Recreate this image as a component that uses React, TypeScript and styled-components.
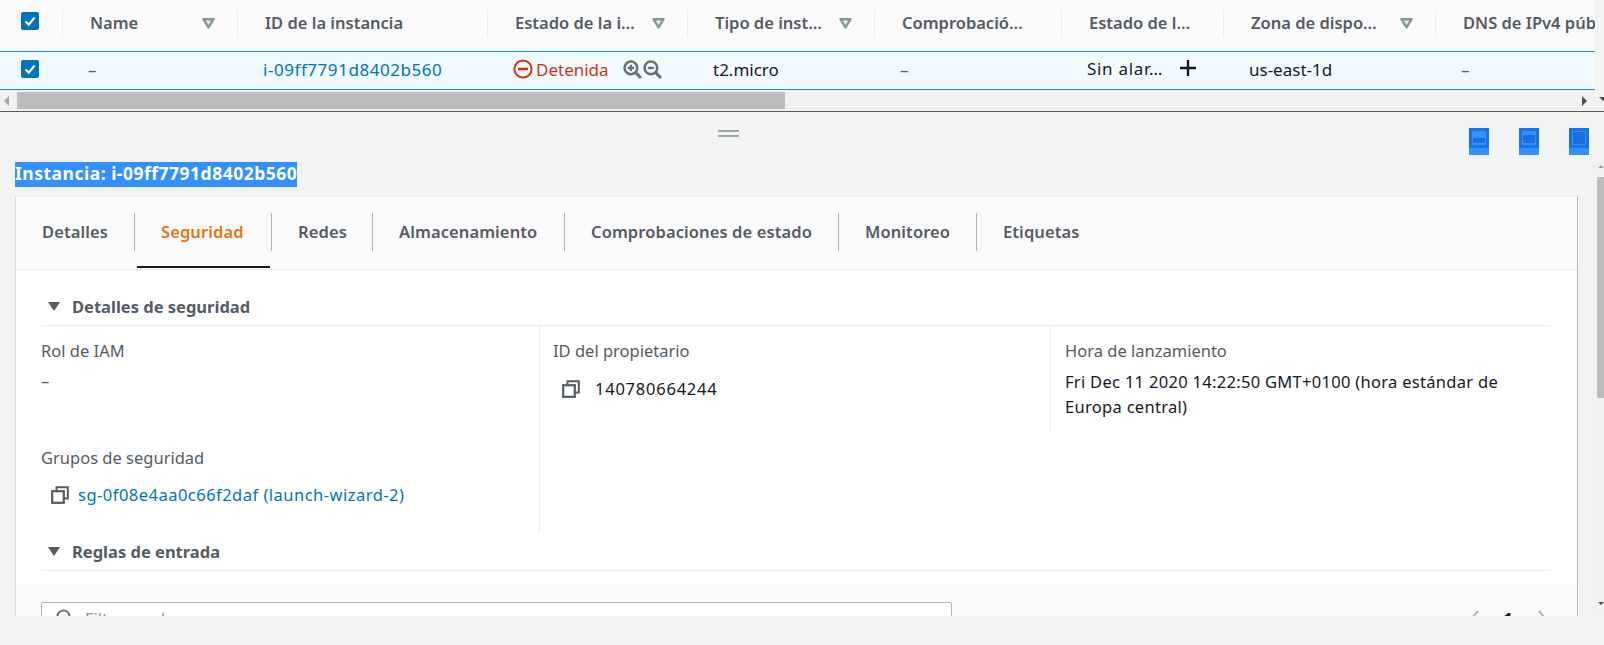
import styled, { createGlobalStyle } from "styled-components";

const Global = createGlobalStyle`
  html, body { margin: 0; padding: 0; background: #f2f3f3; }
  body { font-family: "Noto Sans", Roboto, "Liberation Sans", sans-serif; overflow: hidden; }
`;

const Page = styled.div`
  position: relative;
  width: 1604px;
  height: 645px;
  overflow: hidden;
  background: #f2f3f3;
`;

const columns = "63px 175px 250px 200px 187px 187px 162px 212px 159px";

const TableHead = styled.div`
  display: grid;
  grid-template-columns: ${columns};
  width: 1595px;
  height: 51px;
  background: #fafafa;
  box-sizing: border-box;
  overflow: hidden;
`;

const HeadCell = styled.div<{ $last?: boolean }>`
  position: relative;
  display: flex;
  align-items: center;
  justify-content: space-between;
  height: 27px;
  margin-top: 10px;
  padding: 0 22px 0 27px;
  box-sizing: border-box;
  border-right: ${(p) => (p.$last ? "none" : "1px solid #eaeded")};
  color: #545b64;
  font-size: 16.5px;
  font-weight: 600;
  white-space: nowrap;
  min-width: 0;
`;

const HeadText = styled.span`
  margin-bottom: 3px;
`;

const CheckCell = styled.div`
  height: 27px;
  margin-top: 10px;
  border-right: 1px solid #eaeded;
  padding: 2px 0 0 21px;
  box-sizing: border-box;
`;

const Row = styled.div`
  display: grid;
  grid-template-columns: ${columns};
  width: 1595px;
  height: 39px;
  box-sizing: border-box;
  background: #f1faff;
  border-top: 1px solid #0a97bd;
  border-bottom: 1px solid #0a97bd;
  align-items: center;
  color: #16191f;
  font-size: 17px;
`;

const RowCell = styled.div<{ $raise?: boolean }>`
  display: flex;
  align-items: center;
  padding: 0 0 3px 25px;
  white-space: nowrap;
  ${(p) => (p.$raise ? "margin-top: -2px; letter-spacing: .7px;" : "")}
`;

const RowCheck = styled.div`
  padding: 0 0 3px 21px;
  display: flex;
`;

const Dash = styled.span`
  color: #545b64;
`;

const TableLink = styled.a`
  color: #0073bb;
  letter-spacing: .55px;
`;

const Stopped = styled.span`
  display: inline-flex;
  align-items: center;
  gap: 3px;
  color: #d13212;
  margin-right: 14px;
`;

const ZoomIcons = styled.span`
  display: inline-flex;
  gap: 1px;
`;

const HScroll = styled.div`
  position: relative;
  width: 1604px;
  height: 21px;
  background: #f1f1f1;
  border-bottom: 1px solid #545b64;
  box-sizing: content-box;
`;

const HThumb = styled.div`
  position: absolute;
  left: 17px;
  top: 2px;
  width: 768px;
  height: 17px;
  background: #bdbdbd;
`;

const ArrowLeft = styled.div`
  position: absolute;
  left: 4px;
  top: 6px;
  border: 5px solid transparent;
  border-left: 0;
  border-right: 5px solid #a3a3a3;
`;

const ArrowRight = styled.div`
  position: absolute;
  left: 1582px;
  top: 6px;
  border: 5px solid transparent;
  border-right: 0;
  border-left: 5px solid #505050;
`;

const ArrowDownSmall = styled.div`
  position: absolute;
  left: 1599px;
  top: 7px;
  border: 4px solid transparent;
  border-bottom: 0;
  border-top: 4px solid #505050;
`;

const SplitBar = styled.div`
  position: relative;
  height: 50px;
  width: 1604px;
`;

const Handle = styled.div`
  position: absolute;
  left: 718px;
  top: 18px;
  width: 21px;
  height: 7px;
  border-top: 2px solid #a0a5a5;
  border-bottom: 2px solid #a0a5a5;
  box-sizing: border-box;
`;

const LayoutIcons = styled.div`
  position: absolute;
  left: 1469px;
  top: 16px;
  display: flex;
  gap: 30px;
`;

const TitleLine = styled.div`
  height: 34px;
  padding-left: 15px;
`;

const Title = styled.span`
  display: inline-block;
  background: #3390ff;
  color: #fff;
  font-size: 17.5px;
  font-weight: 700;
  letter-spacing: .5px;
  line-height: 23px;
  height: 25px;
  white-space: nowrap;
`;

const Card = styled.div`
  width: 1563px;
  height: 420px;
  margin-left: 15px;
  box-sizing: border-box;
  background: #fff;
  border-left: 1px solid #d5dbdb;
  border-right: 1px solid #aab7b8;
  border-top: 1px solid #eaeded;
  overflow: hidden;
`;

const Tabs = styled.div`
  display: flex;
  height: 72px;
  background: #fafafa;
  border-bottom: 1px solid #eaeded;
`;

const Tab = styled.div<{ $active?: boolean; $width: number; $last?: boolean }>`
  position: relative;
  width: ${(p) => p.$width}px;
  height: 38px;
  margin-top: 16px;
  box-sizing: border-box;
  display: flex;
  align-items: center;
  padding: 0 0 2px 26px;
  border-right: ${(p) => (p.$last ? "none" : "1px solid #aab7b8")};
  color: ${(p) => (p.$active ? "#ec7211" : "#545b64")};
  font-size: 16.5px;
  font-weight: 600;
  letter-spacing: .1px;
  white-space: nowrap;
  ${(p) =>
    p.$active
      ? `&::after {
          content: "";
          position: absolute;
          left: 2px;
          right: 1px;
          top: 53px;
          height: 2px;
          background: #16191f;
        }`
      : ""}
`;

const Body = styled.div`
  padding: 0 26px 0 25px;
`;

const SectionHead = styled.div<{ $top: number }>`
  display: flex;
  align-items: center;
  gap: 12px;
  margin-top: ${(p) => p.$top}px;
  height: 37px;
  padding: 0 0 2px 7px;
  border-bottom: 1px solid #eaeded;
  box-sizing: border-box;
  color: #545b64;
  font-size: 16.5px;
  font-weight: 700;
`;

const Caret = styled.span`
  width: 0;
  height: 0;
  border-left: 6px solid transparent;
  border-right: 6px solid transparent;
  border-top: 9px solid #545b64;
`;

const FieldGrid = styled.div`
  display: grid;
  grid-template-columns: 499px 510px 1fr;
  height: 208px;
`;

const Column = styled.div<{ $inset?: number; $rule?: boolean }>`
  padding-left: ${(p) => p.$inset ?? 0}px;
  padding-top: 14px;
  height: ${(p) => (p.$rule ? "207px" : "auto")};
  box-sizing: border-box;
  border-right: ${(p) => (p.$rule ? "1px solid #eaeded" : "none")};
`;

const ColumnShort = styled(Column)`
  height: 105px;
  border-left: 1px solid #eaeded;
  padding-right: 40px;
`;

const Label = styled.div`
  color: #545b64;
  font-size: 16.5px;
  line-height: 22px;
`;

const Value = styled.div<{ $gap?: number }>`
  color: #16191f;
  font-size: 16.5px;
  line-height: 25px;
  margin-top: ${(p) => p.$gap ?? 7}px;
`;

const DateValue = styled(Value)`
  letter-spacing: .3px;
`;

const CopyRow = styled.div<{ $left: number; $gap: number; $top: number; $spacing: number }>`
  display: flex;
  align-items: center;
  gap: ${(p) => p.$gap}px;
  padding-left: ${(p) => p.$left}px;
  margin-top: ${(p) => p.$top}px;
  color: #16191f;
  font-size: 16.5px;
  letter-spacing: ${(p) => p.$spacing}px;
  line-height: 25px;
`;

const GroupLabel = styled(Label)`
  margin-top: 54px;
`;

const Link = styled.a`
  color: #0073bb;
`;

const FilterBand = styled.div`
  display: flex;
  align-items: flex-start;
  justify-content: space-between;
  height: 60px;
  margin-top: 13px;
  background: #fafafa;
  padding: 18px 30px 0 25px;
`;

const FilterInput = styled.div`
  display: flex;
  align-items: center;
  gap: 11px;
  width: 911px;
  height: 32px;
  box-sizing: border-box;
  padding-left: 14px;
  background: #fff;
  border: 1px solid #aab7b8;
  border-radius: 2px;
  color: #879596;
  font-size: 16.5px;
`;

const Pager = styled.div`
  display: flex;
  align-items: center;
  gap: 24px;
  height: 32px;
  color: #16191f;
  font-size: 16.5px;
  font-weight: 700;
`;

const VScroll = styled.div`
  position: absolute;
  left: 1590px;
  top: 157px;
  width: 14px;
  height: 458px;
  background: #f1f1f1;
`;

const VThumb = styled.div`
  position: absolute;
  left: 7px;
  top: 20px;
  width: 7px;
  height: 221px;
  background: #bdbdbd;
`;

const VUp = styled.div`
  position: absolute;
  left: 8px;
  top: 8px;
  border: 3px solid transparent;
  border-top: 0;
  border-bottom: 3px solid #a3a3a3;
`;

const VDown = styled.div`
  position: absolute;
  left: 8px;
  top: 445px;
  border: 3px solid transparent;
  border-bottom: 0;
  border-top: 3px solid #505050;
`;

function Check() {
  return (
    <svg width="18" height="18" viewBox="0 0 18 18">
      <rect width="18" height="18" rx="2" fill="#0073bb" />
      <path d="M4.5 9.5 L7.8 12.6 L13.5 5.6" fill="none" stroke="#fff" strokeWidth="2.2" />
    </svg>
  );
}

function Funnel() {
  return (
    <svg width="13" height="11" viewBox="0 0 13 11" style={{ flexShrink: 0 }}>
      <path d="M1.4 1.2 H11.6 L6.5 9.4 Z" fill="#e4e8e8" stroke="#879596" strokeWidth="2.4" strokeLinejoin="round" />
    </svg>
  );
}

function StopIcon() {
  return (
    <svg width="20" height="20" viewBox="0 0 20 20">
      <circle cx="10" cy="10" r="8.6" fill="none" stroke="#d13212" strokeWidth="2" />
      <rect x="5" y="8.7" width="10" height="2.6" fill="#d13212" />
    </svg>
  );
}

function ZoomGlass({ plus }: { plus?: boolean }) {
  return (
    <svg width="19" height="19" viewBox="0 0 18 18">
      <circle cx="7.5" cy="7.5" r="6" fill="none" stroke="#687078" strokeWidth="2.4" />
      <path d="M12 12 L17 17" stroke="#687078" strokeWidth="2.8" />
      <path d="M4.5 7.5 H10.5" stroke="#687078" strokeWidth="2.2" />
      {plus && <path d="M7.5 4.5 V10.5" stroke="#687078" strokeWidth="2.2" />}
    </svg>
  );
}

function PlusIcon() {
  return (
    <svg width="20" height="20" viewBox="0 0 20 20" style={{ marginLeft: 15 }}>
      <path d="M10 2 V18 M2 10 H18" stroke="#16191f" strokeWidth="2.4" />
    </svg>
  );
}

function CopyIcon() {
  return (
    <svg width="18" height="18" viewBox="0 0 18 18" style={{ flexShrink: 0 }}>
      <path d="M5.5 5 V1.2 H16.8 V12.5 H13" fill="none" stroke="#545b64" strokeWidth="2" />
      <rect x="1.2" y="5.2" width="11.6" height="11.6" fill="none" stroke="#545b64" strokeWidth="2.2" />
    </svg>
  );
}

function LayoutIcon({ y, h }: { y: number; h: number }) {
  return (
    <svg width="20" height="27" viewBox="0 0 20 27">
      <rect width="20" height="20" fill="#1a73e0" />
      <rect y="20" width="20" height="7" fill="#3390ff" />
      <rect x="3" y="3" width="14" height="14" fill="#3390ff" />
      <rect x="4" y={y} width="12" height={h} rx="1" fill="#1a6fdc" />
    </svg>
  );
}

function Search() {
  return (
    <svg width="18" height="18" viewBox="0 0 18 18" style={{ flexShrink: 0 }}>
      <circle cx="7.5" cy="7.5" r="6" fill="none" stroke="#687078" strokeWidth="2" />
      <path d="M12 12 L17 17" stroke="#687078" strokeWidth="2.4" />
    </svg>
  );
}

function Chevron({ right }: { right?: boolean }) {
  return (
    <svg width="10" height="16" viewBox="0 0 10 16">
      <path d={right ? "M2 1 L8 8 L2 15" : "M8 1 L2 8 L8 15"} fill="none" stroke="#aab7b8" strokeWidth="2" />
    </svg>
  );
}

const heads: { text: string; filter?: boolean }[] = [
  { text: "Name", filter: true },
  { text: "ID de la instancia" },
  { text: "Estado de la i…", filter: true },
  { text: "Tipo de inst…", filter: true },
  { text: "Comprobació…" },
  { text: "Estado de l…" },
  { text: "Zona de dispo…", filter: true },
  { text: "DNS de IPv4 púb" },
];

const tabs = [
  { text: "Detalles", width: 119 },
  { text: "Seguridad", width: 137, active: true },
  { text: "Redes", width: 101 },
  { text: "Almacenamiento", width: 192 },
  { text: "Comprobaciones de estado", width: 274 },
  { text: "Monitoreo", width: 138 },
  { text: "Etiquetas", width: 200, last: true },
];

export default function App() {
  return (
    <Page>
      <Global />
      <TableHead>
        <CheckCell>
          <Check />
        </CheckCell>
        {heads.map((h, i) => (
          <HeadCell key={h.text} $last={i === heads.length - 1}>
            <HeadText>{h.text}</HeadText>
            {h.filter && <Funnel />}
          </HeadCell>
        ))}
      </TableHead>
      <Row>
        <RowCheck>
          <Check />
        </RowCheck>
        <RowCell>
          <Dash>–</Dash>
        </RowCell>
        <RowCell>
          <TableLink>i-09ff7791d8402b560</TableLink>
        </RowCell>
        <RowCell>
          <Stopped>
            <StopIcon />
            Detenida
          </Stopped>
          <ZoomIcons>
            <ZoomGlass plus />
            <ZoomGlass />
          </ZoomIcons>
        </RowCell>
        <RowCell>t2.micro</RowCell>
        <RowCell>
          <Dash>–</Dash>
        </RowCell>
        <RowCell $raise>
          Sin alar…
          <PlusIcon />
        </RowCell>
        <RowCell>us-east-1d</RowCell>
        <RowCell>
          <Dash>–</Dash>
        </RowCell>
      </Row>
      <HScroll>
        <ArrowLeft />
        <HThumb />
        <ArrowRight />
        <ArrowDownSmall />
      </HScroll>
      <SplitBar>
        <Handle />
        <LayoutIcons>
          <LayoutIcon y={10} h={5} />
          <LayoutIcon y={7} h={8} />
          <LayoutIcon y={4} h={12} />
        </LayoutIcons>
      </SplitBar>
      <TitleLine>
        <Title>Instancia: i-09ff7791d8402b560</Title>
      </TitleLine>
      <Card>
        <Tabs>
          {tabs.map((t) => (
            <Tab key={t.text} $active={t.active} $width={t.width} $last={t.last}>
              {t.text}
            </Tab>
          ))}
        </Tabs>
        <Body>
          <SectionHead $top={19}>
            <Caret />
            Detalles de seguridad
          </SectionHead>
          <FieldGrid>
            <Column $rule>
              <Label>Rol de IAM</Label>
              <Value $gap={6}>
                <Dash>–</Dash>
              </Value>
              <GroupLabel>Grupos de seguridad</GroupLabel>
              <CopyRow $left={10} $gap={9} $top={13} $spacing={0.48}>
                <CopyIcon />
                <Link>sg-0f08e4aa0c66f2daf (launch-wizard-2)</Link>
              </CopyRow>
            </Column>
            <Column $inset={13}>
              <Label>ID del propietario</Label>
              <CopyRow $left={9} $gap={15} $top={14} $spacing={0.77}>
                <CopyIcon />
                140780664244
              </CopyRow>
            </Column>
            <ColumnShort $inset={14}>
              <Label>Hora de lanzamiento</Label>
              <DateValue>Fri Dec 11 2020 14:22:50 GMT+0100 (hora estándar de Europa central)</DateValue>
            </ColumnShort>
          </FieldGrid>
          <SectionHead $top={0}>
            <Caret />
            Reglas de entrada
          </SectionHead>
        </Body>
        <FilterBand>
          <FilterInput>
            <Search />
            Filtrar reglas
          </FilterInput>
          <Pager>
            <Chevron />1
            <Chevron right />
          </Pager>
        </FilterBand>
      </Card>
      <VScroll>
        <VUp />
        <VThumb />
        <VDown />
      </VScroll>
    </Page>
  );
}
